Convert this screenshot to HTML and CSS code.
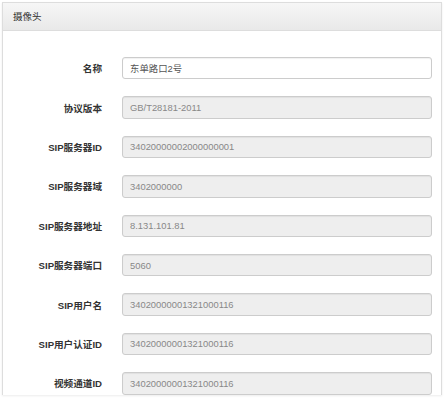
FILE: index.html
```html
<!DOCTYPE html>
<html lang="zh-CN">
<head>
<meta charset="utf-8">
<title>摄像头</title>
<link rel="stylesheet" href="styles.css">
</head>
<body>
<div class="panel">
  <div class="panel-heading">摄像头</div>
  <div class="panel-body">
    <div class="row"><label class="lbl">名称</label><input class="field" type="text" value="东单路口2号"></div>
    <div class="row"><label class="lbl">协议版本</label><input class="field" type="text" value="GB/T28181-2011" disabled></div>
    <div class="row"><label class="lbl">SIP服务器ID</label><input class="field" type="text" value="34020000002000000001" disabled></div>
    <div class="row"><label class="lbl">SIP服务器域</label><input class="field" type="text" value="3402000000" disabled></div>
    <div class="row"><label class="lbl">SIP服务器地址</label><input class="field" type="text" value="8.131.101.81" disabled></div>
    <div class="row"><label class="lbl">SIP服务器端口</label><input class="field" type="text" value="5060" disabled></div>
    <div class="row"><label class="lbl">SIP用户名</label><input class="field" type="text" value="34020000001321000116" disabled></div>
    <div class="row"><label class="lbl">SIP用户认证ID</label><input class="field" type="text" value="34020000001321000116" disabled></div>
    <div class="row"><label class="lbl">视频通道ID</label><input class="field" type="text" value="34020000001321000116" disabled></div>
  </div>
</div>
</body>
</html>
```

FILE: styles.css
```css
html, body {
  margin: 0;
  padding: 0;
  background: #ffffff;
  font-family: "Liberation Sans", "Noto Sans CJK SC", sans-serif;
  color: #333333;
}

.panel {
  margin: 2px 4px 0 2px;
  border: 1px solid #dddddd;
  border-bottom: none;
  box-shadow: 0 1px 2px rgba(0, 0, 0, 0.08);
  background: #ffffff;
}

.panel-heading {
  height: 27px;
  line-height: 27px;
  padding-left: 10px;
  font-size: 9.5px;
  color: #333333;
  background: linear-gradient(to bottom, #f6f6f6, #e9e9e9);
  border-bottom: 1px solid #dddddd;
}

.panel-body {
  padding: 26px 9px 0 0;
}

.row {
  display: flex;
  align-items: center;
  height: 22.4px;
  margin-bottom: 17px;
}

.lbl {
  width: 99px;
  padding-right: 20px;
  text-align: right;
  font-size: 9.6px;
  font-weight: bold;
  color: #333333;
  flex-shrink: 0;
}

.field {
  flex: 1;
  box-sizing: border-box;
  height: 22.4px;
  margin: 0;
  padding: 0 7px;
  border: 1px solid #cccccc;
  border-radius: 3px;
  background: #ffffff;
  font-family: "Liberation Sans", "Noto Sans CJK SC", sans-serif;
  font-size: 9.4px;
  color: #555555;
  box-shadow: inset 0 1px 1px rgba(0, 0, 0, 0.06);
  outline: none;
}

.field:disabled {
  background: #eeeeee;
  color: #888888;
}
```
